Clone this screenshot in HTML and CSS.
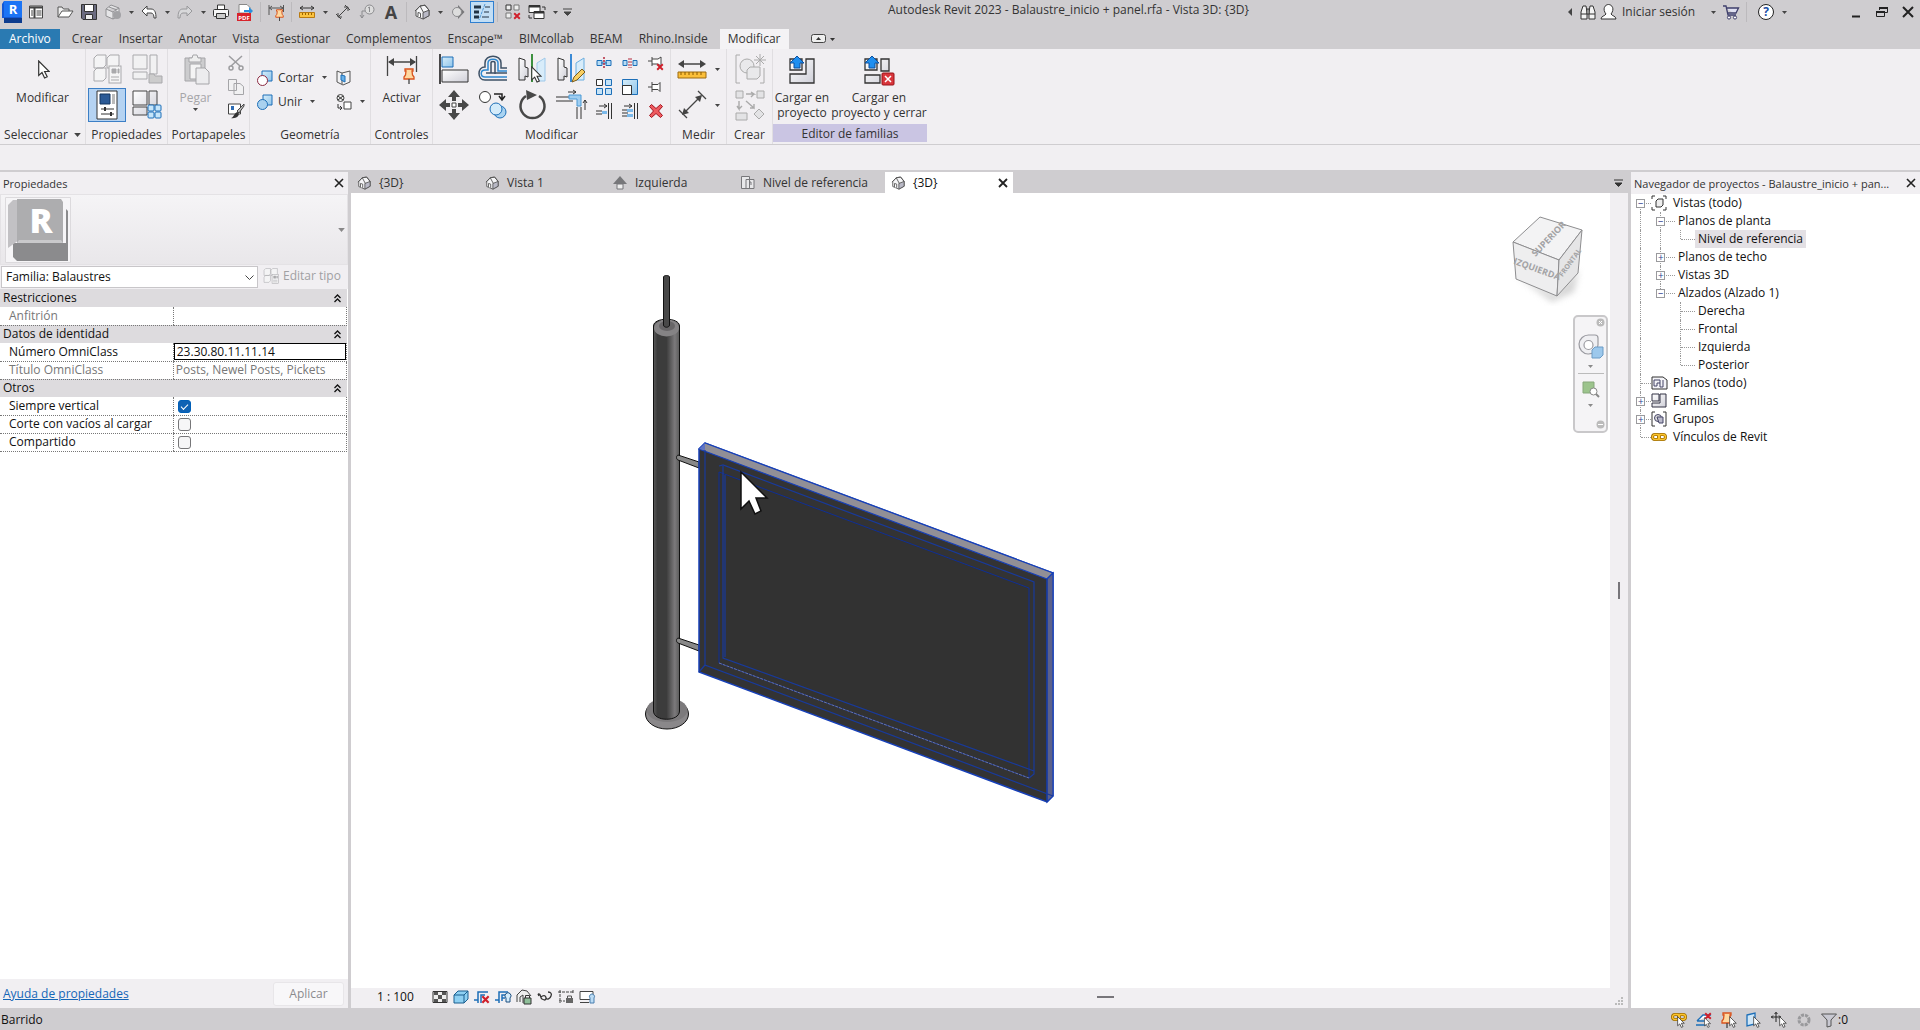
FILE: index.html
```html
<!DOCTYPE html>
<html lang="es">
<head>
<meta charset="utf-8">
<title>Autodesk Revit 2023</title>
<link rel="stylesheet" href="styles.css">
</head>
<body>
<svg class="defs" aria-hidden="true">
  <defs>
    <linearGradient id="steel" x1="0" x2="1" y1="0" y2="0"><stop offset="0" stop-color="#5a5a5a"/><stop offset=".15" stop-color="#3c3c3c"/><stop offset=".5" stop-color="#3c3c3c"/><stop offset=".82" stop-color="#7c7a7c"/><stop offset="1" stop-color="#5a5a5a"/></linearGradient>
    <linearGradient id="shade" x1="0" x2="1" y1="0" y2="1"><stop offset="0" stop-color="#fff"/><stop offset="1" stop-color="#cfcfd8"/></linearGradient>
    <linearGradient id="ice" x1="0" x2="1" y1="0" y2="1"><stop offset="0" stop-color="#d8eefa"/><stop offset="1" stop-color="#8fc4ea"/></linearGradient>
    <symbol id="caret" viewBox="0 0 5 3"><path d="M0 0h5L2.500 3z" fill="#444"/></symbol>
    <symbol id="house" viewBox="0 0 16 16"><path d="M2 6.500 6 2l5-.8 4 5v5.500L9 15l-7-3z" fill="#f5f5f7" stroke="#555" stroke-linejoin="round"/><path d="M9 15V8.500l6-2.300v5.500z" fill="#b9b9c6" stroke="#555"/><path d="M1 7 6 2l3.500 6.500M6 2l5-.8 4 5" fill="none" stroke="#555"/><path d="M4 12.500V8.500l2.500.8v4.200" fill="#fff" stroke="#555"/></symbol>
    <symbol id="pointer" viewBox="0 0 12 19"><path d="M.7 1v14.500l3.300-3 2.600 5.500 2.600-1.200-2.600-5.300h4.600z" fill="#fff" stroke="#333" stroke-width="1.200"/></symbol>
    <symbol id="pin" viewBox="0 0 12 16"><path d="M2 1h8v2H9l.5 4L11 9v2H1V9l1.500-2L3 3H2z" fill="#ffd9a0" stroke="#d9531e" stroke-width="1.300"/><path d="M6 11v5" stroke="#444" stroke-width="1.300"/></symbol>
    <symbol id="redx" viewBox="0 0 10 10"><path d="m1.500 1.500 7 7m0-7-7 7" stroke="#d01f2b" stroke-width="2.400"/></symbol>
    <symbol id="chain" viewBox="0 0 16 8"><g fill="none" stroke="#a06e00" stroke-width="3"><rect x="1.500" y="1.500" width="7" height="5" rx="2.500"/><rect x="7.500" y="1.500" width="7" height="5" rx="2.500"/></g><g fill="none" stroke="#fdc52d" stroke-width="1.300"><rect x="1.500" y="1.500" width="7" height="5" rx="2.500"/><rect x="7.500" y="1.500" width="7" height="5" rx="2.500"/></g></symbol>
    <symbol id="dupe" viewBox="0 0 30 30"><g fill="#f4f4f5" stroke="#a9a9ac"><path d="M2 4 5 1h9v10l-3 3H2zM15 4l3-3h9v10l-3 3h-9zM2 17l3-3h9v10l-3 3H2z"/><rect x="17" y="12" width="12" height="17"/></g><path d="M20 15h4v4h-4zM26 15h1v4h-1zM19 23h8m-8 3h8" fill="#a9a9ac" stroke="#a9a9ac"/></symbol>
  </defs>
</svg>

<header class="titlebar">
  <div class="quick">
    <button class="q" aria-label="Revit"><svg width="20" height="22" viewBox="0 0 20 22"><path d="M0 3 2 0h18v16l-2 6H2v-5H0z" fill="#1359d6"/><path d="M2 0h18v16H2z" fill="#1b74f5"/><path d="M2 17h18v5H2z" fill="#0d3c8e"/><text x="11" y="13" text-anchor="middle" class="logo-letter">R</text></svg></button>
    <button class="q first" aria-label="Inicio"><svg width="16" height="16" viewBox="0 0 16 16"><path d="M1.500 2h13v12h-13z" fill="#fff" stroke="#444"/><path d="M1 3.500h14M6.500 4v10" stroke="#444" stroke-width="2"/><path d="M8.500 7h5m-5 2h5m-5 2h5M3 7h2M3 9h2M3 11h2" stroke="#444"/></svg></button>
    <button class="q" aria-label="Abrir"><svg width="16" height="16" viewBox="0 0 16 16"><path d="M1 13V3h4l1.500 2H12v3" fill="#eee" stroke="#555"/><path d="m1 13 4-6h11l-4 6z" fill="#fff" stroke="#555"/></svg></button>
    <button class="q" aria-label="Guardar"><svg width="16" height="16" viewBox="0 0 16 16"><path d="M.5.5h15v15H2l-1.500-1.500z" fill="#6b6b80" stroke="#333"/><path d="M3.500.5h9v7h-9z" fill="#fff" stroke="#333"/><path d="M4.500 10.500h7v5h-7z" fill="#eee" stroke="#333"/></svg></button>
    <button class="q" aria-label="Sincronizar"><svg width="16" height="16" viewBox="0 0 16 16"><path d="m1 5 5-4 8 3v8l-6 3-7-3zM1 5l7 3 6-4M8 8v7M4 3l8 3" fill="#e5e5e7" stroke="#909093"/><circle cx="12" cy="11" r="4" fill="#a2a2a5"/></svg></button>
    <button class="c" aria-label="Más"><svg width="5" height="3"><use href="#caret"/></svg></button>
    <button class="q" aria-label="Deshacer"><svg width="16" height="14" viewBox="0 0 16 14"><path d="m1 6 5-5v3h4c4 0 5 4 5 9h-2c0-3-1-5-3-5H6v3z" fill="#fff" stroke="#444"/></svg></button>
    <button class="c" aria-label="Más"><svg width="5" height="3"><use href="#caret"/></svg></button>
    <button class="q" aria-label="Rehacer"><svg width="16" height="14" viewBox="0 0 16 14"><path d="m15 6-5-5v3H6C2 4 1 8 1 13h2c0-3 1-5 3-5h4v3z" fill="#d8d8da" stroke="#98989b"/></svg></button>
    <button class="c" aria-label="Más"><svg width="5" height="3"><use href="#caret"/></svg></button>
    <button class="q" aria-label="Imprimir"><svg width="16" height="16" viewBox="0 0 16 16"><path d="M4.500 1h7v5h-7z" fill="#fff" stroke="#333"/><rect x=".5" y="5.500" width="15" height="7" rx="1" fill="#f7f7f7" stroke="#333"/><path d="M3.500 9.500h9v5h-9z" fill="#ccc" stroke="#333"/></svg></button>
    <button class="q" aria-label="PDF"><svg width="17" height="17" viewBox="0 0 17 17"><path d="M2 .5h8l3 3V9H2z" fill="#fff" stroke="#888"/><path d="M7 6h5V3l4 4-4 4V8H7z" fill="#2b8fdc"/><path d="M0 9h14v8H0z" fill="#d8232a"/><text x="7" y="16" text-anchor="middle" class="pdf-letter">PDF</text></svg></button>
    <i class="sep"></i>
    <button class="q" aria-label="Cota alineada"><svg width="17" height="17" viewBox="0 0 17 17"><path d="M1 1v10M15.500 1v7M1 4h14M4 2 1.500 4 4 6m8-4 3 2-3 2" fill="none" stroke="#555"/><use href="#pin" x="7" y="5" width="9" height="12"/></svg></button>
    <i class="sep"></i>
    <button class="q" aria-label="Medir"><svg width="16" height="14" viewBox="0 0 16 14"><path d="M1 3h14M4 1 1 3l3 2m8-4 3 2-3 2" fill="none" stroke="#333"/><path d="M.5 7.500h15v5H.5z" fill="#fbc340" stroke="#b97b12"/><path d="M3.500 8v2m3-2v2m3-2v2m3-2v2" stroke="#9c6500"/></svg></button>
    <button class="c" aria-label="Más"><svg width="5" height="3"><use href="#caret"/></svg></button>
    <button class="q" aria-label="Cota"><svg width="16" height="16" viewBox="0 0 16 16"><path d="m3 13 10-10M1 10l5 5M10 1l5 5M3 9v4h4M9 3h4v4" fill="none" stroke="#444"/></svg></button>
    <button class="q" aria-label="Etiqueta"><svg width="16" height="16" viewBox="0 0 16 16"><circle cx="10.500" cy="5.500" r="4.500" fill="#ddd" stroke="#8b8b8e"/><path d="M10.500 3v5M9 4l1.500-1M6 7H3v7m-2-3 2 3 2-3" fill="none" stroke="#8b8b8e"/></svg></button>
    <button class="q letter-a" aria-label="Texto">A</button>
    <i class="sep"></i>
    <button class="q" aria-label="Vista 3D"><svg width="16" height="16"><use href="#house"/></svg></button>
    <button class="c" aria-label="Más"><svg width="5" height="3"><use href="#caret"/></svg></button>
    <button class="q" aria-label="Sección"><svg width="14" height="14" viewBox="0 0 14 14"><path d="m7 0 6.500 7L7 14z" fill="#77777a"/><circle cx="6" cy="7" r="4.500" fill="#ddd" stroke="#8b8b8e"/></svg></button>
    <button class="q on" aria-label="Líneas finas"><svg width="18" height="16" viewBox="0 0 18 16"><path d="M1 3h7M1 8h5M1 13h5" stroke="#234" stroke-width="3"/><path d="M12 3h5M11 8h5M9 13h7" stroke="#234"/><path d="M12 0 6 16" stroke="#4f97d6" stroke-dasharray="3 1"/></svg></button>
    <i class="sep"></i>
    <button class="q" aria-label="Cerrar ocultas"><svg width="16" height="16" viewBox="0 0 16 16"><g fill="#eee" stroke="#777"><path d="M1 1h5v5H1z" stroke="#333"/><path d="M9 1h5v5H9zM1 9h5v5H1z"/></g><use href="#redx" x="8" y="8" width="8" height="8"/></svg></button>
    <button class="q" aria-label="Cambiar ventanas"><svg width="18" height="17" viewBox="0 0 18 17"><path d="M1 1.500h11v7H1zM6 7.500h10v7H6z" fill="#fff" stroke="#333"/><path d="M1 2.500h11M6 8.500h10" stroke="#333" stroke-width="2"/><path d="M14 3h3v3M1 11v3h3" fill="none" stroke="#333"/></svg></button>
    <button class="c" aria-label="Más"><svg width="5" height="3"><use href="#caret"/></svg></button>
    <button class="c" aria-label="Personalizar"><svg width="9" height="8" viewBox="0 0 9 8"><path d="M0 1h9M1 4h7L4.500 7.500z" stroke="#444" fill="#444" stroke-width="1"/></svg></button>
  </div>
  <h1 class="doc-title">Autodesk Revit 2023 - Balaustre_inicio + panel.rfa - Vista 3D: {3D}</h1>
  <div class="account">
    <button class="c" aria-label="Contraer"><svg width="4" height="8" viewBox="0 0 4 8"><path d="M4 0v8L0 4z" fill="#444"/></svg></button>
    <button class="q" aria-label="Buscar"><svg width="16" height="16" viewBox="0 0 16 16"><g fill="#f3f3f3" stroke="#333"><path d="M1 15V8l2-6h3l1 6v7zM15 15V8l-2-6h-3L9 8v7z"/><path d="M7 5h2v5H7zM1 10h6m2 0h6"/></g></svg></button>
    <button class="signin"><svg width="17" height="16" viewBox="0 0 17 16"><path d="M1 15c0-3 4-3 5-5-4-5-1-9.500 2.500-9.500S15 5 11 10c1 2 5 2 5 5z" fill="#fff" stroke="#333"/></svg><span>Iniciar sesión</span></button>
    <button class="c" aria-label="Más"><svg width="5" height="3"><use href="#caret"/></svg></button>
    <button class="q" aria-label="Tienda"><svg width="16" height="15" viewBox="0 0 16 15"><path d="M0 1h3l2 9h8M3.500 3h12L13 8H5" fill="#dfe0f2" stroke="#3f3f6b" stroke-width="1.300"/><circle cx="6" cy="12.500" r="1.600" fill="#fff" stroke="#3f3f6b"/><circle cx="12" cy="12.500" r="1.600" fill="#fff" stroke="#3f3f6b"/></svg></button>
    <i class="sep"></i>
    <button class="help" aria-label="Ayuda">?</button>
    <button class="c" aria-label="Más"><svg width="5" height="3"><use href="#caret"/></svg></button>
  </div>
  <div class="winctl">
    <button aria-label="Minimizar"><svg width="12" height="12" viewBox="0 0 12 12"><path d="M2 10.500h8" stroke="#222" stroke-width="2"/></svg></button>
    <button aria-label="Restaurar"><svg width="12" height="12" viewBox="0 0 12 12"><path d="M3.500 4V1.500h8v5H9M.5 5.500h8v5h-8z" fill="none" stroke="#222"/><path d="M3 2h9M0 6h9" stroke="#222" stroke-width="2"/></svg></button>
    <button aria-label="Cerrar"><svg width="12" height="12" viewBox="0 0 12 12"><path d="m1 1 10 10m0-10L1 11" stroke="#222" stroke-width="2"/></svg></button>
  </div>
</header>

<nav class="tabs">
  <a href="#" class="file">Archivo</a><a href="#">Crear</a><a href="#">Insertar</a><a href="#">Anotar</a><a href="#">Vista</a><a href="#">Gestionar</a><a href="#">Complementos</a><a href="#">Enscape™</a><a href="#">BIMcollab</a><a href="#">BEAM</a><a href="#">Rhino.Inside</a><a href="#" class="active">Modificar</a>
  <button class="collapse" aria-label="Minimizar cinta"><svg width="24" height="10" viewBox="0 0 24 10"><rect x=".5" y=".5" width="14" height="8" rx="2" fill="#eee" stroke="#444"/><path d="M5 6h5L7.500 3z" fill="#333"/><path d="M19 4h5l-2.500 3z" fill="#333"/></svg></button>
</nav>

<section class="ribbon">
  <div class="panel p-select">
    <div class="body"><button class="big"><svg class="i32" viewBox="0 0 32 32"><use href="#pointer" x="11" y="6" width="12" height="19"/></svg><span>Modificar</span></button></div>
    <div class="label">Seleccionar <svg width="7" height="4"><use href="#caret"/></svg></div>
  </div>
  <div class="panel p-props">
    <div class="body grid2">
      <button aria-label="Propiedades de tipo"><svg class="i30"><use href="#dupe"/></svg></button>
      <button aria-label="Familia"><svg class="i30" viewBox="0 0 30 30"><g fill="#f1f1f2" stroke="#a9a9ac"><path d="M1 1h14v14H1zM18 1h7v19h-7zM1 18h14v7H1z"/><path d="M17 20h5l1 2h7v7H17z" fill="#ccc"/></g></svg></button>
      <button class="pressed" aria-label="Propiedades"><svg class="i30" viewBox="0 0 30 30"><path d="M5 1h20v28H5z" fill="#fff" stroke="#333"/><path d="M8 4h10v10H8z" fill="#2b5a96" stroke="#12345e"/><path d="M20 4h3v10h-3z" fill="#bbb"/><path d="M9 19h13M9 24h13" stroke="#333"/><path d="M13 17v4m6 1v4" stroke="#333" stroke-width="2"/></svg></button>
      <button aria-label="Categorías"><svg class="i30" viewBox="0 0 30 30"><g fill="url(#shade)" stroke="#444"><path d="M1 1h14v14H1zM17 1h8v14h-8zM1 17h14v8H1z"/></g><g fill="#c6e5fa" stroke="#1d6fb8"><rect x="16" y="15" width="6" height="6" rx="1"/><rect x="23" y="15" width="6" height="6" rx="1"/><rect x="16" y="22" width="6" height="6" rx="1"/><rect x="23" y="22" width="6" height="6" rx="1"/></g></svg></button>
    </div>
    <div class="label">Propiedades</div>
  </div>
  <div class="panel p-clip">
    <div class="body">
      <button class="big dim"><svg class="i32" viewBox="0 0 32 32"><path d="M5 4h20v23H5z" fill="#ccccce" stroke="#a5a5a8"/><path d="M9 4h3l1-3h4l1 3h3v4H9z" fill="#eee" stroke="#a5a5a8"/><path d="M10 10h11v15H10z" fill="#f4f4f4" stroke="#a5a5a8"/><path d="M16 14h9l4 4v12H16z" fill="#ececee" stroke="#a5a5a8"/></svg><span>Pegar</span><svg width="5" height="3"><use href="#caret"/></svg></button>
      <div class="small3">
        <button aria-label="Cortar"><svg class="i16" viewBox="0 0 16 16"><g fill="none" stroke="#9d9da0" stroke-width="1.500"><path d="m1 1 11 10M14 1 3 11"/><circle cx="3" cy="13" r="2"/><circle cx="13" cy="13" r="2"/></g></svg></button>
        <button aria-label="Copiar"><svg class="i16" viewBox="0 0 16 16"><path d="M.5.500h8v11h-8zM6 4.500h6l3.500 3v8H6z" fill="#f1f1f2" stroke="#a5a5a8"/></svg></button>
        <button aria-label="Igualar tipo"><svg class="i16" viewBox="0 0 16 16"><path d="M.5 1h12v10H.5z" fill="#fff" stroke="#444"/><path d="M3 3h3v4H3z" fill="#2e6cb5"/><path d="m16 1-7 7 2 2 5-7z" fill="#bbb" stroke="#444"/><path d="M3 15c3 0 3-6 7-6 3 4-3 7-7 6z" fill="#333"/></svg></button>
      </div>
    </div>
    <div class="label">Portapapeles</div>
  </div>
  <div class="panel p-geom">
    <div class="body rows">
      <div><button class="txt"><svg class="i16" viewBox="0 0 16 16"><path d="M5 1h10v10H5z" fill="url(#ice)" stroke="#1d6fb8"/><circle cx="5.500" cy="10.500" r="5" fill="#fff" stroke="#8b2942"/></svg><span>Cortar</span><svg width="5" height="3"><use href="#caret"/></svg></button><button class="txt" aria-label="Dividir cara"><svg class="i16" viewBox="0 0 16 16"><path d="m1 1 5 2 8-2v11l-7 3-6-3z" fill="#f1f1f3" stroke="#555"/><path d="M6 3v11" stroke="#555"/><path d="M5 5 9 6v6l-4-2z" fill="#67b0e8" stroke="#1d6fb8"/></svg></button></div>
      <div><button class="txt"><svg class="i16" viewBox="0 0 16 16"><path d="M6 1h9v10H6z" fill="url(#ice)" stroke="#1d6fb8"/><circle cx="5.500" cy="10.500" r="5" fill="#a9d1ef" stroke="#1d6fb8"/></svg><span>Unir</span><svg width="5" height="3"><use href="#caret"/></svg></button><button class="txt joinopt" aria-label="Opciones"><svg class="i16" viewBox="0 0 16 16"><circle cx="4.500" cy="4" r="3.500" fill="#eee" stroke="#444"/><path d="m2 2 5 4m0-4L2 6M2 10v4h4m-2-2 2 2-2 2" fill="none" stroke="#333"/><path d="M8 8h7v7H8z" fill="#fff" stroke="#444"/></svg><svg width="5" height="3"><use href="#caret"/></svg></button></div>
    </div>
    <div class="label">Geometría</div>
  </div>
  <div class="panel p-ctrl">
    <div class="body"><button class="big"><svg class="i32" viewBox="0 0 32 32"><path d="M1.500 2v20M30.500 2v16" stroke="#444" stroke-width="1.300"/><path d="M3 8h26" stroke="#444" stroke-width="1.500"/><path d="M2 8l6-4v8zM30 8l-6-4v8z" fill="#444"/><use href="#pin" x="17" y="14" width="12" height="16"/></svg><span>Activar</span></button></div>
    <div class="label">Controles</div>
  </div>
  <div class="panel p-mod">
    <div class="body">
      <div class="grid4">
        <button aria-label="Alinear"><svg class="i30" viewBox="0 0 30 30"><path d="M1 0v30" stroke="#111" stroke-width="1.500"/><path d="M3 3h11v10H3z" fill="url(#ice)" stroke="#1d6fb8"/><path d="M3 16h26v12H3z" fill="url(#shade)" stroke="#333"/></svg></button>
        <button aria-label="Desfase"><svg class="i30" viewBox="0 0 30 30"><g fill="none" stroke-width="1.500"><path d="M29 14h-6V9C23 0 7 0 7 9v4c-8 0-8 13 0 13h22" stroke="#3e5166"/><path d="M29 17h-9V9c0-5-10-5-10 0v7H7c-5 0-5 7 0 7h22" stroke="#2e88cf"/><path d="M17 20V9c0-2-4-2-4 0v10H8h21" stroke="#3e5166"/></g></svg></button>
        <button aria-label="Simetría eje"><svg class="i30" viewBox="0 0 30 30"><path d="m2 4 6 2v7l3 1v9L8 22v4H2z" fill="url(#shade)" stroke="#333"/><path d="m28 4-8 5v18h8z" fill="#d8ecfa" stroke="#9ec9ea"/><path d="M15 0v28" stroke="#3d9140" stroke-width="2"/><use href="#pointer" x="14" y="12" width="11" height="17"/></svg></button>
        <button aria-label="Simetría dibujar"><svg class="i30" viewBox="0 0 30 30"><path d="m2 4 6 2v7l3 1v9L8 22v4H2z" fill="url(#shade)" stroke="#333"/><path d="m28 4-8 5v17h8z" fill="#d8ecfa" stroke="#6baee0"/><path d="M15 0v28" stroke="#3b8ad6" stroke-width="2"/><path d="m16 28 2-5 8-8 3 3-8 8z" fill="#f8cf62" stroke="#7a5a1c"/></svg></button>
        <button aria-label="Mover"><svg class="i30" viewBox="0 0 30 30"><g fill="#484848"><path d="m15 0 6 7h-4v4h-4V7H9zM15 30l6-7h-4v-4h-4v4H9zM0 15l7-6v4h4v4H7v4zM30 15l-7-6v4h-4v4h4v4z"/></g><path d="M13 13h4v4h-4z" fill="#fff" stroke="#444"/></svg></button>
        <button aria-label="Copiar elemento"><svg class="i30" viewBox="0 0 30 30"><circle cx="7" cy="7" r="5.500" fill="#fff" stroke="#333"/><path d="M16 4h8v5m-3-3 3 4 3-4" fill="none" stroke="#222" stroke-width="1.500"/><circle cx="22" cy="22" r="6" fill="#a9d3f1" stroke="#1d6fb8"/><circle cx="18" cy="19" r="6" fill="#d4ebfa" stroke="#1d6fb8"/></svg></button>
        <button aria-label="Rotar"><svg class="i30" viewBox="0 0 30 30"><path d="M9 6a12 12 0 1 0 13 0" fill="none" stroke="#484848" stroke-width="2.500"/><path d="m9 0 11 5-10 5z" fill="#484848"/></svg></button>
        <button aria-label="Recortar"><svg class="i30" viewBox="0 0 30 30"><path d="M0 7h17M0 11h17M21 17v12M25 17v12" stroke="#333"/><path d="M13 5h12v11h-4V9h-8z" fill="#9fcdf0" stroke="#4a9ad6"/><path d="M12 2h8l-3-2m3 2-3 2M29 20V10l-2 3m2-3 2 3" fill="none" stroke="#333"/></svg></button>
      </div>
      <div class="grid3">
        <button aria-label="Dividir"><svg class="i16" viewBox="0 0 16 16"><path d="M1 5.500h5v5H1zM10 5.500h5v5h-5z" fill="#b7dcf5" stroke="#1d6fb8"/><path d="M5 8h6" stroke="#1d6fb8"/><path d="M8 2v12" stroke="#b4293c" stroke-dasharray="2 1" stroke-width="1.500"/></svg></button>
        <button aria-label="Dividir con hueco"><svg class="i16" viewBox="0 0 16 16"><path d="M1 5.500h4v5H1zM11 5.500h4v5h-4z" fill="#b7dcf5" stroke="#1d6fb8"/><path d="M7 3v10m2-10v10" stroke="#b4293c" stroke-dasharray="2 1"/></svg></button>
        <button aria-label="Desbloquear"><svg class="i16" viewBox="0 0 16 16"><path d="M0 6h4M4 2v9M4 4h6l3-2v9l-3-2H4" fill="#fff" stroke="#444"/><use href="#redx" x="8" y="8" width="8" height="8"/></svg></button>
        <button aria-label="Matriz"><svg class="i16" viewBox="0 0 16 16"><g fill="#c6e3f7" stroke="#1d6fb8"><path d="M.5.5h6v6h-6z" fill="#fff" stroke="#333"/><path d="M9.500.5h6v6h-6zM.5 9.500h6v6h-6zM9.500 9.500h6v6h-6z"/></g></svg></button>
        <button aria-label="Escala"><svg class="i16" viewBox="0 0 16 16"><path d="M.5.5h15v15H.5z" fill="url(#ice)" stroke="#1d6fb8"/><path d="M.5 6.500h9v9h-9z" fill="#fff" stroke="#333"/></svg></button>
        <button aria-label="Bloquear"><svg class="i16" viewBox="0 0 16 16"><path d="M0 8h4M4 3v10M4 5.500h6l2-2v9l-2-2H4" fill="#fff" stroke="#444"/></svg></button>
        <button aria-label="Recortar uno"><svg class="i16" viewBox="0 0 16 16"><path d="M3 3h8M8 1l3 2-3 2M0 8h6M0 11h6" fill="none" stroke="#333"/><path d="M6 8h5v3H6z" fill="#7bb9ea"/><path d="M12.500 0v16M15.500 0v16" stroke="#333"/></svg></button>
        <button aria-label="Recortar varios"><svg class="i16" viewBox="0 0 16 16"><path d="M2 3h8M7 1l3 2-3 2M0 7h6M0 10h6M0 13h6" fill="none" stroke="#333"/><path d="M5 6h6v3H5zM5 11h6v3H5z" fill="#7bb9ea"/><path d="M12.500 0v16M15.500 0v16" stroke="#333"/></svg></button>
        <button aria-label="Suprimir"><svg class="i16" viewBox="0 0 16 16"><path d="m3.500 1.500 4.500 4 4.500-4 2 2-4 4.500 4 4.500-2 2-4.500-4-4.500 4-2-2 4-4.500-4-4.500z" fill="#ee5a5f" stroke="#a3141f"/></svg></button>
      </div>
    </div>
    <div class="label">Modificar</div>
  </div>
  <div class="panel p-meas">
    <div class="body stack2">
      <button aria-label="Medir distancia"><svg class="i30" viewBox="0 0 30 30"><path d="M3 10h24" stroke="#444" stroke-width="1.500"/><path d="m1 10 6-4v8zM29 10l-6-4v8z" fill="#444"/><path d="M1 18h28v6H1z" fill="#fbbf3a" stroke="#9c6b10"/><path d="M4 18v3m4-3v3m4-3v3m4-3v3m4-3v3m4-3v3" stroke="#8a5a00"/></svg><svg width="5" height="3"><use href="#caret"/></svg></button>
      <button aria-label="Cota alineada"><svg class="i30" viewBox="0 0 30 30"><path d="m6 24 18-18M2 20l8 8M21 1l8 8" stroke="#444" stroke-width="1.300"/><path d="m5 25 2-7 5 5zM25 5l-2 7-5-5z" fill="#444"/></svg><svg width="5" height="3"><use href="#caret"/></svg></button>
    </div>
    <div class="label">Medir</div>
  </div>
  <div class="panel p-create">
    <div class="body stack2">
      <button aria-label="Crear grupo"><svg class="i30" viewBox="0 0 30 30"><path d="M5 1H1v28h4M25 29h4V14" fill="none" stroke="#aaa"/><g fill="#e9e9eb" stroke="#aaa"><circle cx="12" cy="12" r="7"/><path d="m12 16 3-3h10v9l-3 3H12z"/></g><path d="M25 0v12M19 6h12M21 2l8 8m0-8-8 8" stroke="#aaa"/></svg></button>
      <button aria-label="Crear similar"><svg class="i30" viewBox="0 0 30 30"><g fill="#e3e3e5" stroke="#aaa"><path d="M1 1h7v7H1zM22 1h7v7h-7zM1 23h11v7H1zM24 19l5 5-5 5-5-5z"/><path d="M11 4h8l-3-2m3 2-3 3M4 11v8l-2-3m2 3 3-3M11 11l8 7v-4m0 4h-4" fill="none" stroke-width="1.400"/></g></svg></button>
    </div>
    <div class="label">Crear</div>
  </div>
  <div class="panel p-edit">
    <div class="body">
      <button class="big load"><svg class="i32" viewBox="0 0 32 32"><path d="M4 5h12v11H4zM4 20h16V5h8v24H4z" fill="url(#shade)" stroke="#333" stroke-width="1.300"/><path d="m11 2 7 7h-4v5H8V9H4z" fill="#1f8ff0" stroke="#0d4f9c"/></svg><span>Cargar en<br>proyecto</span></button>
      <button class="big load-close"><svg class="i32" viewBox="0 0 32 32"><path d="M2 5h12v11H2zM2 21h15v8H2zM18 5h8v12h-8z" fill="url(#shade)" stroke="#333" stroke-width="1.300"/><path d="m9 2 7 7h-4v5H6V9H2z" fill="#1f8ff0" stroke="#0d4f9c"/><rect x="19" y="19" width="12" height="12" rx="1" fill="#d9363c" stroke="#9a1218"/><path d="m22 22 6 6m0-6-6 6" stroke="#fff" stroke-width="1.500"/></svg><span>Cargar en<br>proyecto y cerrar</span></button>
    </div>
    <div class="label">Editor de familias</div>
  </div>
</section>
<div class="options"></div>

<main class="work">
  <aside class="props">
    <header class="dock-head"><h2>Propiedades</h2><button aria-label="Cerrar"><svg width="10" height="10" viewBox="0 0 10 10"><path d="m1 1 8 8m0-8L1 9" stroke="#222" stroke-width="1.600"/></svg></button></header>
    <div class="typebox">
      <svg width="66" height="66" viewBox="0 0 66 66"><path d="M.5.5h65v65H.5z" fill="#f6f5f7" stroke="#dcdadd"/><path d="M8 46h53V12l2 2v50H12l-4-4z" fill="#8b8b8d"/><path d="M3 8 8 3h48v40H14L3 51z" fill="#c2c1c4"/><path d="M12 2h44l2 3v41H12z" fill="#adadaf"/><path d="M12 46h46l-2-3H14z" fill="#c9c9cb"/><text x="36" y="36" text-anchor="middle" class="thumb-letter">R</text></svg>
      <svg width="7" height="4" class="faded"><use href="#caret"/></svg>
    </div>
    <div class="family">
      <div class="combo"><select aria-label="Familia"><option>Familia: Balaustres</option></select><svg width="9" height="6" viewBox="0 0 9 6"><path d="m.5.500 4 4 4-4" fill="none" stroke="#444"/></svg></div>
      <button class="edit-type" disabled><svg width="16" height="16"><use href="#dupe"/></svg>Editar tipo</button>
    </div>
    <table class="grid">
      <tbody>
        <tr class="sec"><th colspan="2"><span>Restricciones<svg width="7" height="8" viewBox="0 0 7 8"><path d="m.5 4 3-3 3 3m-6 4 3-3 3 3" fill="none" stroke="#111" stroke-width="1.300"/></svg></span></th></tr>
        <tr class="off"><th>Anfitrión</th><td></td></tr>
        <tr class="sec"><th colspan="2"><span>Datos de identidad<svg width="7" height="8" viewBox="0 0 7 8"><path d="m.5 4 3-3 3 3m-6 4 3-3 3 3" fill="none" stroke="#111" stroke-width="1.300"/></svg></span></th></tr>
        <tr><th><label for="omni">Número OmniClass</label></th><td class="edit"><input id="omni" type="text" value="23.30.80.11.11.14"></td></tr>
        <tr class="off"><th>Título OmniClass</th><td>Posts, Newel Posts, Pickets</td></tr>
        <tr class="sec"><th colspan="2"><span>Otros<svg width="7" height="8" viewBox="0 0 7 8"><path d="m.5 4 3-3 3 3m-6 4 3-3 3 3" fill="none" stroke="#111" stroke-width="1.300"/></svg></span></th></tr>
        <tr><th><label for="vert">Siempre vertical</label></th><td><input id="vert" type="checkbox" checked></td></tr>
        <tr><th><label for="cut">Corte con vacíos al cargar</label></th><td><input id="cut" type="checkbox"></td></tr>
        <tr><th><label for="shared">Compartido</label></th><td><input id="shared" type="checkbox"></td></tr>
      </tbody>
    </table>
    <footer class="props-foot"><a href="#">Ayuda de propiedades</a><button disabled>Aplicar</button></footer>
  </aside>

  <section class="view">
    <nav class="doc-tabs">
      <a href="#"><svg class="i14"><use href="#house"/></svg>{3D}</a>
      <a href="#"><svg class="i14"><use href="#house"/></svg>Vista 1</a>
      <a href="#"><svg class="i14" viewBox="0 0 14 14"><path d="m7 0 7 8H0z" fill="#77777a"/><path d="M4 8h6v5H4z" fill="#eee" stroke="#77777a"/></svg>Izquierda</a>
      <a href="#" class="plan"><svg class="i14" viewBox="0 0 14 14"><path d="M.5.5h8v12h-8zM5 3.500h8v9H5z" fill="#e8e8ea" stroke="#77777a"/><path d="M8 6h2v3" fill="none" stroke="#77777a"/></svg>Nivel de referencia</a>
      <a href="#" class="active"><svg class="i14"><use href="#house"/></svg>{3D}<svg class="close" width="10" height="10" viewBox="0 0 10 10"><path d="m1 1 8 8m0-8L1 9" stroke="#222" stroke-width="1.800"/></svg></a>
      <button aria-label="Lista de vistas"><svg width="9" height="8" viewBox="0 0 9 8"><path d="M0 1h9M1 4h7L4.500 7.500z" stroke="#333" fill="#333"/></svg></button>
    </nav>
    <div class="stage">
      <div class="canvas">
        <svg class="model" width="460" height="560" viewBox="0 0 460 560">
          <ellipse cx="47" cy="454" rx="21.500" ry="15" fill="#8a888a" stroke="#111"/>
          <ellipse cx="47" cy="450" rx="20.500" ry="12" fill="#7c7a7c"/>
          <path d="M33.500 66v385c0 11 26 11 26 0V66c0-9-26-9-26 0z" fill="url(#steel)" stroke="#111"/>
          <ellipse cx="46.500" cy="68" rx="12.500" ry="8.500" fill="#858385"/><ellipse cx="47" cy="66" rx="8" ry="5" fill="#676567"/>
          <path d="M43.500 17c0-2 6-2 6 0v48c0 3-6 3-6 0z" fill="#484848" stroke="#111"/>
          <path d="m58 195 21 7v6l-21-8c-2-1-2-4 0-5zM58 378l21 7v6l-21-8c-2-1-2-4 0-5z" fill="#888" stroke="#111"/>
          <path d="m79 189 6-6 348 130v223l-6 6L79 412z" fill="#333334" stroke="#1740b8" stroke-width="1.500"/>
          <path d="m79 189 6-6 348 130-6 6z" fill="#918f96" stroke="#1740b8" stroke-width="1.200"/>
          <path d="m427 319 6-6v223l-6 6z" fill="#5c618a" stroke="#1740b8" stroke-width="1.200"/>
          <path d="m79 189 6-6v7z" fill="#5e73c4"/>
          <path d="M99 212v191l310 115V328z" fill="#323232" stroke="#0f2f96"/>
          <g fill="none" stroke="#183a9c" stroke-width="1.200"><path d="M85 190v215l348 131M99 206l4-1 311 117v192l-5 4M103 206v192l311 113M105 215v182M79 412l6-7M427 319v223"/></g>
          <path d="m99 403 310 115" stroke="#8f94b0" stroke-dasharray="3 1" stroke-width=".7"/>
          <path d="M121 212v37l8-8 6 13 6-3-5-13h11z" fill="#fff" stroke="#111" stroke-width="1.500"/>
        </svg>
        <svg class="cube" width="84" height="90" viewBox="0 0 84 90">
          <defs><filter id="soft"><feGaussianBlur stdDeviation="3"/></filter></defs>
          <path d="m5 62 40 20 25-24-5 22-22 10z" fill="#bbb" opacity=".6" filter="url(#soft)"/>
          <g stroke="#8d8d8f" fill="#f3f3f4"><path d="m31 5 42 13-23 30L4 30z"/><path d="m4 30 46 18-2 36-41-17z" fill="#eeeeef"/><path d="m50 48 23-30-4 43-21 23z" fill="#e5e5e6"/></g>
          <g class="cube-text"><text transform="translate(42 29) rotate(-46)">SUPERIOR</text><text transform="translate(27 60) rotate(20)">IZQUIERDA</text><text class="tiny" transform="translate(63 52) rotate(-54)">FRONTAL</text></g>
        </svg>
        <div class="navbar">
          <button aria-label="Cerrar"><svg width="9" height="9" viewBox="0 0 9 9"><circle cx="4.500" cy="4.500" r="4" fill="#bbb"/><path d="m3 3 3 3m0-3L3 6" stroke="#fff"/></svg></button>
          <button class="mid" aria-label="Rueda de navegación"><svg width="26" height="26" viewBox="0 0 26 26"><path d="M11 1h6c2 0 3 1 3 3v7a9.500 9.500 0 1 1-9-10z" fill="#efeff2" stroke="#9a9aa0" stroke-width="1.200"/><circle cx="10.500" cy="11" r="4.500" fill="#fff" stroke="#9a9aa0" stroke-width="1.200"/><path d="m14 16 3-3h8v8l-3 3h-8z" fill="#9cc8ec" stroke="#6a9bc5"/></svg></button>
          <button aria-label="Más"><svg width="5" height="3" class="faded"><use href="#caret"/></svg></button>
          <hr>
          <button class="mid" aria-label="Zoom"><svg width="18" height="18" viewBox="0 0 18 18"><path d="M1 1h11v11H1z" fill="#9cc48c" stroke="#87a87a"/><circle cx="11.500" cy="10.500" r="3.500" fill="#fff" stroke="#888"/><path d="m14 13 3 3" stroke="#888" stroke-width="2"/></svg></button>
          <button aria-label="Más"><svg width="5" height="3" class="faded"><use href="#caret"/></svg></button>
          <button class="last" aria-label="Opciones"><svg width="9" height="9" viewBox="0 0 9 9"><circle cx="4.500" cy="4.500" r="4" fill="#bbb"/><path d="M2 4.500h5" stroke="#fff"/></svg></button>
        </div>
      </div>
      <div class="vscroll"><i></i></div>
    </div>
    <div class="viewbar">
      <span class="scale">1 : 100</span>
      <button aria-label="Nivel de detalle"><svg class="i16" viewBox="0 0 16 16"><path d="M1 2.500h14v11H1z" fill="#eee" stroke="#333"/><path d="M2 3h4v3H2zM10 3h4v3h-4zM6 6h4v4H6zM2 10h4v3H2zM10 10h4v3h-4z" fill="#555"/></svg></button>
      <button aria-label="Estilo visual"><svg class="i16" viewBox="0 0 16 16"><path d="m1 6 4-4h10v8l-4 4H1z" fill="#8ed0f2" stroke="#1b5f8f"/><path d="M1 6h10v8M11 6l4-4" fill="none" stroke="#1b5f8f"/></svg></button>
      <button aria-label="Recorte"><svg class="i16" viewBox="0 0 16 16"><path d="M0 11h4M4 14V3h10M7 14V6h4" fill="none" stroke="#1d6fb8" stroke-width="1.500"/><use href="#redx" x="7" y="6" width="9" height="9"/></svg></button>
      <button aria-label="Región de recorte"><svg class="i16" viewBox="0 0 16 16"><path d="M0 11h4M4 14V3h9M7 12V6h3M7 9h3" fill="none" stroke="#1d6fb8" stroke-width="1.500"/><path d="M11 9a3 3 0 1 1 4 0v4h-4z" fill="#d5ecfb" stroke="#1d4f80"/></svg></button>
      <button aria-label="Vista bloqueada"><svg class="i16" viewBox="0 0 16 16"><path d="M1 13V6l5-5 5 1 4 5" fill="#eee" stroke="#444"/><path d="M4 13V8l3-2v8" fill="none" stroke="#444"/><path d="M8 9h7v6H8z" fill="#8fbf9a" stroke="#333"/><path d="M9.500 9V6.500h4V9" fill="none" stroke="#333"/></svg></button>
      <button aria-label="Ocultar temporal"><svg class="i16" viewBox="0 0 16 16"><path d="M1 5c3-1 2 4 4 5s4 2 4-1-3-3-5-1M9 9c1 2 4 1 5-2 1-2 0-4-3-4M1 5l1 2" fill="none" stroke="#333" stroke-width="1.300"/></svg></button>
      <button aria-label="Restricciones"><svg class="i16" viewBox="0 0 16 16"><path d="M2 1v13M15 1v4M0 3h16M1 12h6" stroke="#444" stroke-dasharray="3 1"/><path d="M8 9h7v5H8z" fill="#666"/><path d="M9.500 9V7h4v2" fill="none" stroke="#555"/></svg></button>
      <button aria-label="Vista previa"><svg class="i16" viewBox="0 0 16 16"><path d="M1 2.500h13v8H1z" fill="#fff" stroke="#444"/><path d="M1 13.500h9" stroke="#444"/><path d="M11 9a2.500 2.500 0 1 1 4 0v5h-4z" fill="#bcdcf5" stroke="#4a7fae"/></svg></button>
      <i class="thumb"></i>
      <svg class="grip" width="9" height="9" viewBox="0 0 9 9"><path d="M6 0h2v2H6zM3 3h2v2H3zM6 3h2v2H6zM0 6h2v2H0zM3 6h2v2H3zM6 6h2v2H6z" fill="#bbb"/></svg>
    </div>
  </section>

  <aside class="browser">
    <header class="dock-head"><h2>Navegador de proyectos - Balaustre_inicio + pan...</h2><button aria-label="Cerrar"><svg width="10" height="10" viewBox="0 0 10 10"><path d="m1 1 8 8m0-8L1 9" stroke="#222" stroke-width="1.600"/></svg></button></header>
    <ul class="tree">
      <li><i class="g start"><button aria-label="Contraer">−</button></i><svg class="i16" viewBox="0 0 16 16"><path d="M4 1H1v3M12 1h3v3M4 15H1v-3M12 15h3v-3" fill="none" stroke="#333"/><path d="m5 6 2-2h5v6l-2 2H5z" fill="#eee" stroke="#333"/></svg><span>Vistas (todo)</span></li>
      <li><i class="g v"></i><i class="g t"><button aria-label="Contraer">−</button></i><span class="n">Planos de planta</span></li>
      <li><i class="g v"></i><i class="g v"></i><i class="g l"></i><span class="n sel">Nivel de referencia</span></li>
      <li><i class="g v"></i><i class="g t"><button aria-label="Expandir">+</button></i><span class="n">Planos de techo</span></li>
      <li><i class="g v"></i><i class="g t"><button aria-label="Expandir">+</button></i><span class="n">Vistas 3D</span></li>
      <li><i class="g v"></i><i class="g l"><button aria-label="Contraer">−</button></i><span class="n">Alzados (Alzado 1)</span></li>
      <li><i class="g v"></i><i class="g"></i><i class="g t"></i><span class="n">Derecha</span></li>
      <li><i class="g v"></i><i class="g"></i><i class="g t"></i><span class="n">Frontal</span></li>
      <li><i class="g v"></i><i class="g"></i><i class="g t"></i><span class="n">Izquierda</span></li>
      <li><i class="g v"></i><i class="g"></i><i class="g l"></i><span class="n">Posterior</span></li>
      <li><i class="g t"></i><svg class="i16" viewBox="0 0 16 16"><path d="M1 2h11l4 3v9H1z" fill="#f4f4f8" stroke="#333"/><path d="M3 5h6v3H6v3H3zM9 8v4h3V5" fill="none" stroke="#446"/></svg><span>Planos (todo)</span></li>
      <li><i class="g t"><button aria-label="Expandir">+</button></i><svg class="i16" viewBox="0 0 16 16"><path d="M1 1h7v7H1zM1 10h8V1h6v13H1z" fill="url(#shade)" stroke="#334"/></svg><span>Familias</span></li>
      <li><i class="g t"><button aria-label="Expandir">+</button></i><svg class="i16" viewBox="0 0 16 16"><path d="M4 1H1v14h3M12 1h3v14h-3" fill="none" stroke="#333"/><circle cx="7" cy="7" r="3.500" fill="#ddd" stroke="#446"/><path d="M6 6h6v6H8z" fill="#bbc" stroke="#446"/></svg><span>Grupos</span></li>
      <li><i class="g l"></i><svg class="i16"><use href="#chain"/></svg><span>Vínculos de Revit</span></li>
    </ul>
  </aside>
</main>

<footer class="status">
  <span>Barrido</span>
  <div class="picks">
    <button aria-label="Seleccionar vínculos"><svg class="i16" viewBox="0 0 16 16"><use href="#chain" y="1" width="16" height="8"/><use href="#pointer" x="6" y="4" width="8" height="12"/></svg></button>
    <button aria-label="Seleccionar subyacentes"><svg class="i16" viewBox="0 0 16 16"><path d="m1 9 6-6h8M0 13h10M1 9h8" fill="#fff" stroke="#1d6fb8" stroke-width="1.400"/><use href="#redx" x="8" y="0" width="8" height="8"/><use href="#pointer" x="8" y="5" width="7" height="11"/></svg></button>
    <button aria-label="Seleccionar bloqueados"><svg class="i16" viewBox="0 0 16 16"><use href="#pin" width="12" height="16"/><use href="#pointer" x="8" y="4" width="8" height="12"/></svg></button>
    <button aria-label="Seleccionar por cara"><svg class="i16" viewBox="0 0 16 16"><path d="m1 3 8-2v11l-8 2z" fill="#cfe6f7" stroke="#1d6fb8" stroke-width="1.300"/><use href="#pointer" x="7" y="4" width="8" height="12"/></svg></button>
    <button aria-label="Arrastrar"><svg class="i16" viewBox="0 0 16 16"><path d="M5 0v10M0 5h10M3.500 2 5 .500 6.500 2M2 3.500.500 5 2 6.500M8 3.500 9.500 5 8 6.500" fill="none" stroke="#222"/><use href="#pointer" x="8" y="4" width="8" height="12"/></svg></button>
    <button aria-label="Procesos"><svg class="i16" viewBox="0 0 16 16"><circle cx="8" cy="8" r="5" fill="none" stroke="#99999c" stroke-width="3" stroke-dasharray="3 1"/></svg></button>
    <button class="filter"><svg class="i16" viewBox="0 0 16 16"><path d="M.5 2h15L10 8v6l-4 1V8z" fill="#c9c9d2" stroke="#555"/></svg>:0</button>
  </div>
</footer>
</body>
</html>
```
FILE: styles.css
```css
* { box-sizing: border-box; }

body {
  margin: 0;
  min-height: 100vh;
  display: flex;
  flex-direction: column;
  background: #f1eff2;
  color: #333;
  font: 12px/16px "Open Sans", "Noto Sans", sans-serif;
  overflow-x: hidden;
}

button {
  padding: 0;
  border: 0;
  background: none;
  color: inherit;
  font: inherit;
  display: flex;
  align-items: center;
  justify-content: center;
}

a { color: inherit; text-decoration: none; }
h1, h2 { margin: 0; font: inherit; }
svg { flex: none; overflow: visible; }
.defs { position: absolute; width: 0; height: 0; }
.i14 { width: 14px; height: 14px; }
.i16 { width: 16px; height: 16px; }
.i30 { width: 30px; height: 30px; }
.i32 { width: 32px; height: 32px; }

/* Title bar */
.titlebar {
  display: flex;
  align-items: center;
  height: 29px;
  padding-bottom: 5px;
  background: #cfcdd0;
}
.quick, .account, .winctl { display: flex; align-items: center; }
.q { width: 24px; height: 22px; }
.q.first { margin-right: 5px; }
.q.on { border: 1px solid #2f7fd0; background: #c2def5; }
.c { width: 12px; height: 22px; }
.sep { width: 1px; height: 20px; margin: 0 3px; background: #bcbabd; }
.logo-letter { font: bold 13px "Open Sans", sans-serif; fill: #fff; }
.pdf-letter { font: bold 6px "Open Sans", sans-serif; fill: #fff; }
.letter-a { font: bold 18px "Open Sans", sans-serif; color: #444; }
.doc-title { flex: 1; text-align: center; padding-bottom: 4px; white-space: nowrap; }
.signin { gap: 5px; margin-right: 12px; }
.help {
  width: 16px;
  height: 16px;
  margin: 0 4px 0 8px;
  border: 1px solid #222;
  border-radius: 50%;
  background: #fff;
  color: #1d50a8;
  font-weight: bold;
}
.winctl { gap: 14px; padding: 0 6px 0 60px; }

/* Ribbon tabs */
.tabs { display: flex; height: 20px; background: #cfcdd0; line-height: 20px; }
.tabs a { padding: 0 8px; white-space: nowrap; }
.tabs .file { margin-right: 4px; padding: 0 9px; background: #2a7ab2; color: #fff; }
.tabs .active { margin-left: 4px; background: #f4f3f5; }
.collapse { margin-left: 22px; }

/* Ribbon */
.ribbon { display: flex; height: 96px; border-bottom: 1px solid #cfcdd0; }
.panel {
  display: flex;
  flex-direction: column;
  padding-top: 2px;
  border-right: 1px solid #e0dee1;
}
.p-select { width: 86px; }
.p-props, .p-clip { width: 82px; }
.p-geom { width: 121px; }
.p-ctrl { width: 62px; }
.p-mod { width: 238px; }
.p-meas { width: 56px; }
.p-create { width: 46px; }
.p-edit { width: 154px; border: 0; }
.body { flex: 1; display: flex; justify-content: center; }
.label {
  display: flex;
  align-items: center;
  justify-content: center;
  gap: 6px;
  height: 20px;
  padding-top: 1px;
  white-space: nowrap;
}
.p-edit .label { height: 18px; margin-bottom: 2px; background: #cac5e3; }
.big { flex-direction: column; justify-content: flex-start; padding-top: 3px; line-height: 15px; white-space: nowrap; }
.big span { margin-top: 4px; }
.big span + svg { margin-top: 3px; }
.p-edit .body { justify-content: flex-start; }
.load { width: 58px; }
.load-close { width: 96px; }
.dim { color: #a6a6a9; }
.grid2 { display: grid; grid-template: 36px 36px / 40px 40px; }
.pressed { height: 34px; width: 38px; margin: 1px; border: 1px solid #3c7fc6; background: #b5d3f2; }
.small3, .grid3 { display: grid; grid-auto-rows: 24px; }
.small3 { grid-template-columns: 26px; }
.p-clip .big { width: 54px; }
.rows { flex-direction: column; padding: 4px 0 0 7px; }
.rows > div { display: flex; justify-content: space-between; height: 24px; padding-right: 18px; }
.rows .joinopt { margin-right: -13px; }
.txt { gap: 5px; }
.txt svg + svg { margin-left: 3px; }
.txt span + svg { margin-left: 3px; }
.grid4 { display: grid; grid-template: 36px 36px / repeat(4, 39px); }
.grid3 { grid-template-columns: repeat(3, 26px); }
.stack2 { display: grid; grid-auto-rows: 36px; }
.stack2 button { gap: 8px; }

.options { height: 27px; border-bottom: 2px solid #cfcdd0; }

/* Work area */
.work { flex: 1; display: flex; }
.props { display: flex; flex-direction: column; width: 351px; border-right: 3px solid #cfcdd0; background: #fff; }
.browser { display: flex; flex-direction: column; width: 292px; border-left: 3px solid #cfcdd0; background: #fff; }
.dock-head { display: flex; align-items: center; height: 22px; padding: 0 4px 0 3px; background: #f1eff2; }
.dock-head h2 { flex: 1; padding-top: 1px; font-size: 11px; white-space: nowrap; }

.typebox {
  display: flex;
  align-items: center;
  justify-content: space-between;
  height: 71px;
  padding: 0 2px 0 4px;
  border: 1px solid #e4e2e5;
  background: linear-gradient(#f5f4f6, #e9e7ea);
}
.faded { opacity: .6; }
.thumb-letter { font: 800 34px "Open Sans", sans-serif; fill: #fff; }
.family { display: flex; height: 24px; padding-top: 1px; background: #f1eff2; }
.combo { position: relative; width: 257px; margin-left: 1px; }
.combo select {
  width: 100%;
  height: 22px;
  padding: 0 4px;
  appearance: none;
  border: 1px solid #c8c6c9;
  border-radius: 0;
  background: #fff;
  color: #111;
  font: inherit;
}
.combo svg { position: absolute; right: 4px; top: 9px; }
.edit-type { gap: 4px; margin-left: 5px; height: 20px; color: #a0a0a3; white-space: nowrap; }

.grid { width: 347px; border-collapse: collapse; table-layout: fixed; background: #fff; color: #111; }
.grid tr { height: 18px; }
.grid th, .grid td {
  height: 18px;
  padding: 0 0 0 9px;
  border-bottom: 1px dotted #777;
  font-weight: normal;
  text-align: left;
  line-height: 16px;
}
.grid th { white-space: nowrap; }
.grid td { padding: 0 0 0 2px; border-left: 1px dotted #777; border-right: 1px dotted #777; }
.grid .sec th { padding: 0 6px 0 3px; border: 0; background: #dddbde; }
.sec span { display: flex; align-items: center; justify-content: space-between; }
.grid .off { color: #777; }
.grid input[type="text"] {
  display: block;
  width: 100%;
  height: 17px;
  padding: 0 2px;
  border: 1px solid #000;
  background: #fff;
  color: #111;
  font: inherit;
}
.grid td.edit { padding: 0; }
.grid input[type="checkbox"] {
  display: block;
  width: 13px;
  height: 13px;
  margin: 1px 0 0 2px;
  appearance: none;
  border: 1px solid #767678;
  border-radius: 3px;
  background: #f6f6f7;
}
.grid input[type="checkbox"]:checked { border-color: #005fb8; background: #0f62b4; }
.grid input[type="checkbox"]:checked::before {
  content: "";
  display: block;
  width: 6px;
  height: 3px;
  margin: 3px 0 0 2px;
  border: solid #fff;
  border-width: 0 0 1px 1px;
  transform: rotate(-45deg);
}
.props-foot {
  display: flex;
  justify-content: space-between;
  align-items: flex-start;
  height: 29px;
  margin-top: auto;
  padding: 3px 4px 0 3px;
  background: #f1eff2;
}
.props-foot a { padding-top: 4px; color: #1566b7; text-decoration: underline; }
.props-foot button { width: 71px; height: 24px; border: 1px solid #e8e6e9; border-radius: 3px; background: #f8f7f9; color: #8a8a8d; }

/* Drawing area */
.view { flex: 1; display: flex; flex-direction: column; min-width: 0; }
.doc-tabs { display: flex; height: 21px; background: #cfcdd0; }
.doc-tabs a { display: flex; align-items: center; gap: 8px; width: 128px; padding: 1px 5px 0 6px; white-space: nowrap; }
.doc-tabs .plan { width: 150px; }
.doc-tabs .active { background: #fff; color: #111; }
.doc-tabs .close { margin-left: auto; }
.doc-tabs button { width: 20px; margin-left: auto; }
.stage { flex: 1; display: flex; }
.canvas { position: relative; flex: 1; min-height: 640px; background: #fff; }
.model { position: absolute; left: 269px; top: 67px; }
.cube { position: absolute; right: 17px; top: 19px; }
.cube-text { fill: #a3a3a5; font: bold 9px "Open Sans", sans-serif; text-anchor: middle; }
.cube-text .tiny { font-size: 7px; }
.navbar {
  position: absolute;
  right: 2px;
  top: 122px;
  width: 35px;
  height: 118px;
  display: flex;
  flex-direction: column;
  align-items: center;
  gap: 5px;
  padding: 1px 1px 2px;
  border: 2px solid #c9c8ca;
  border-radius: 5px;
  background: #f5f4f6;
}
.navbar button:first-child, .navbar .last { align-self: flex-end; }
.navbar .mid { margin-top: 2px; }
.navbar .last { margin-top: auto; }
.navbar hr { width: 26px; margin: 0; border: 0; border-top: 1px solid #bbb; }
.vscroll { display: flex; align-items: center; justify-content: center; width: 18px; background: #f1eff2; }
.vscroll i { width: 2px; height: 17px; background: #77757a; }
.viewbar { display: flex; align-items: center; gap: 5px; height: 20px; padding-bottom: 2px; background: #f1eff2; }
.scale { width: 76px; padding-left: 26px; color: #111; white-space: nowrap; }
.viewbar .thumb { width: 17px; height: 2px; margin: 0 auto; background: #77757a; }
.grip { align-self: flex-end; margin-right: 4px; }

/* Project browser tree */
.tree { margin: 0; padding: 0; list-style: none; color: #111; }
.tree li { display: flex; align-items: center; height: 18px; }
.tree span { padding: 0 3px; margin-left: 3px; line-height: 18px; white-space: nowrap; }
.tree .n { margin-left: 4px; }
.tree .sel { background: #e3e0e4; }
.g { position: relative; display: flex; align-items: center; width: 20px; height: 18px; padding-left: 5px; }
.g::before, .g::after { position: absolute; }
.v::before, .t::before, .l::before, .start::before { content: ""; left: 9px; top: 0; height: 18px; border-left: 1px dotted #999; }
.l::before { height: 9px; }
.start::before { top: 9px; height: 9px; }
.t::after, .l::after, .start::after { content: ""; left: 10px; top: 9px; width: 14px; border-top: 1px dotted #999; }
.g:has(+ svg)::after { width: 10px; }
.g button {
  position: relative;
  z-index: 1;
  width: 9px;
  height: 9px;
  border: 1px solid #9a9a9d;
  background: #fff;
  color: #2c3c8c;
  font-size: 10px;
  line-height: 7px;
}

/* Status bar */
.status { display: flex; align-items: center; justify-content: space-between; height: 22px; padding: 1px 72px 0 1px; background: #cfcdd0; color: #111; }
.picks { display: flex; gap: 9px; }
.filter { gap: 1px; }
```
